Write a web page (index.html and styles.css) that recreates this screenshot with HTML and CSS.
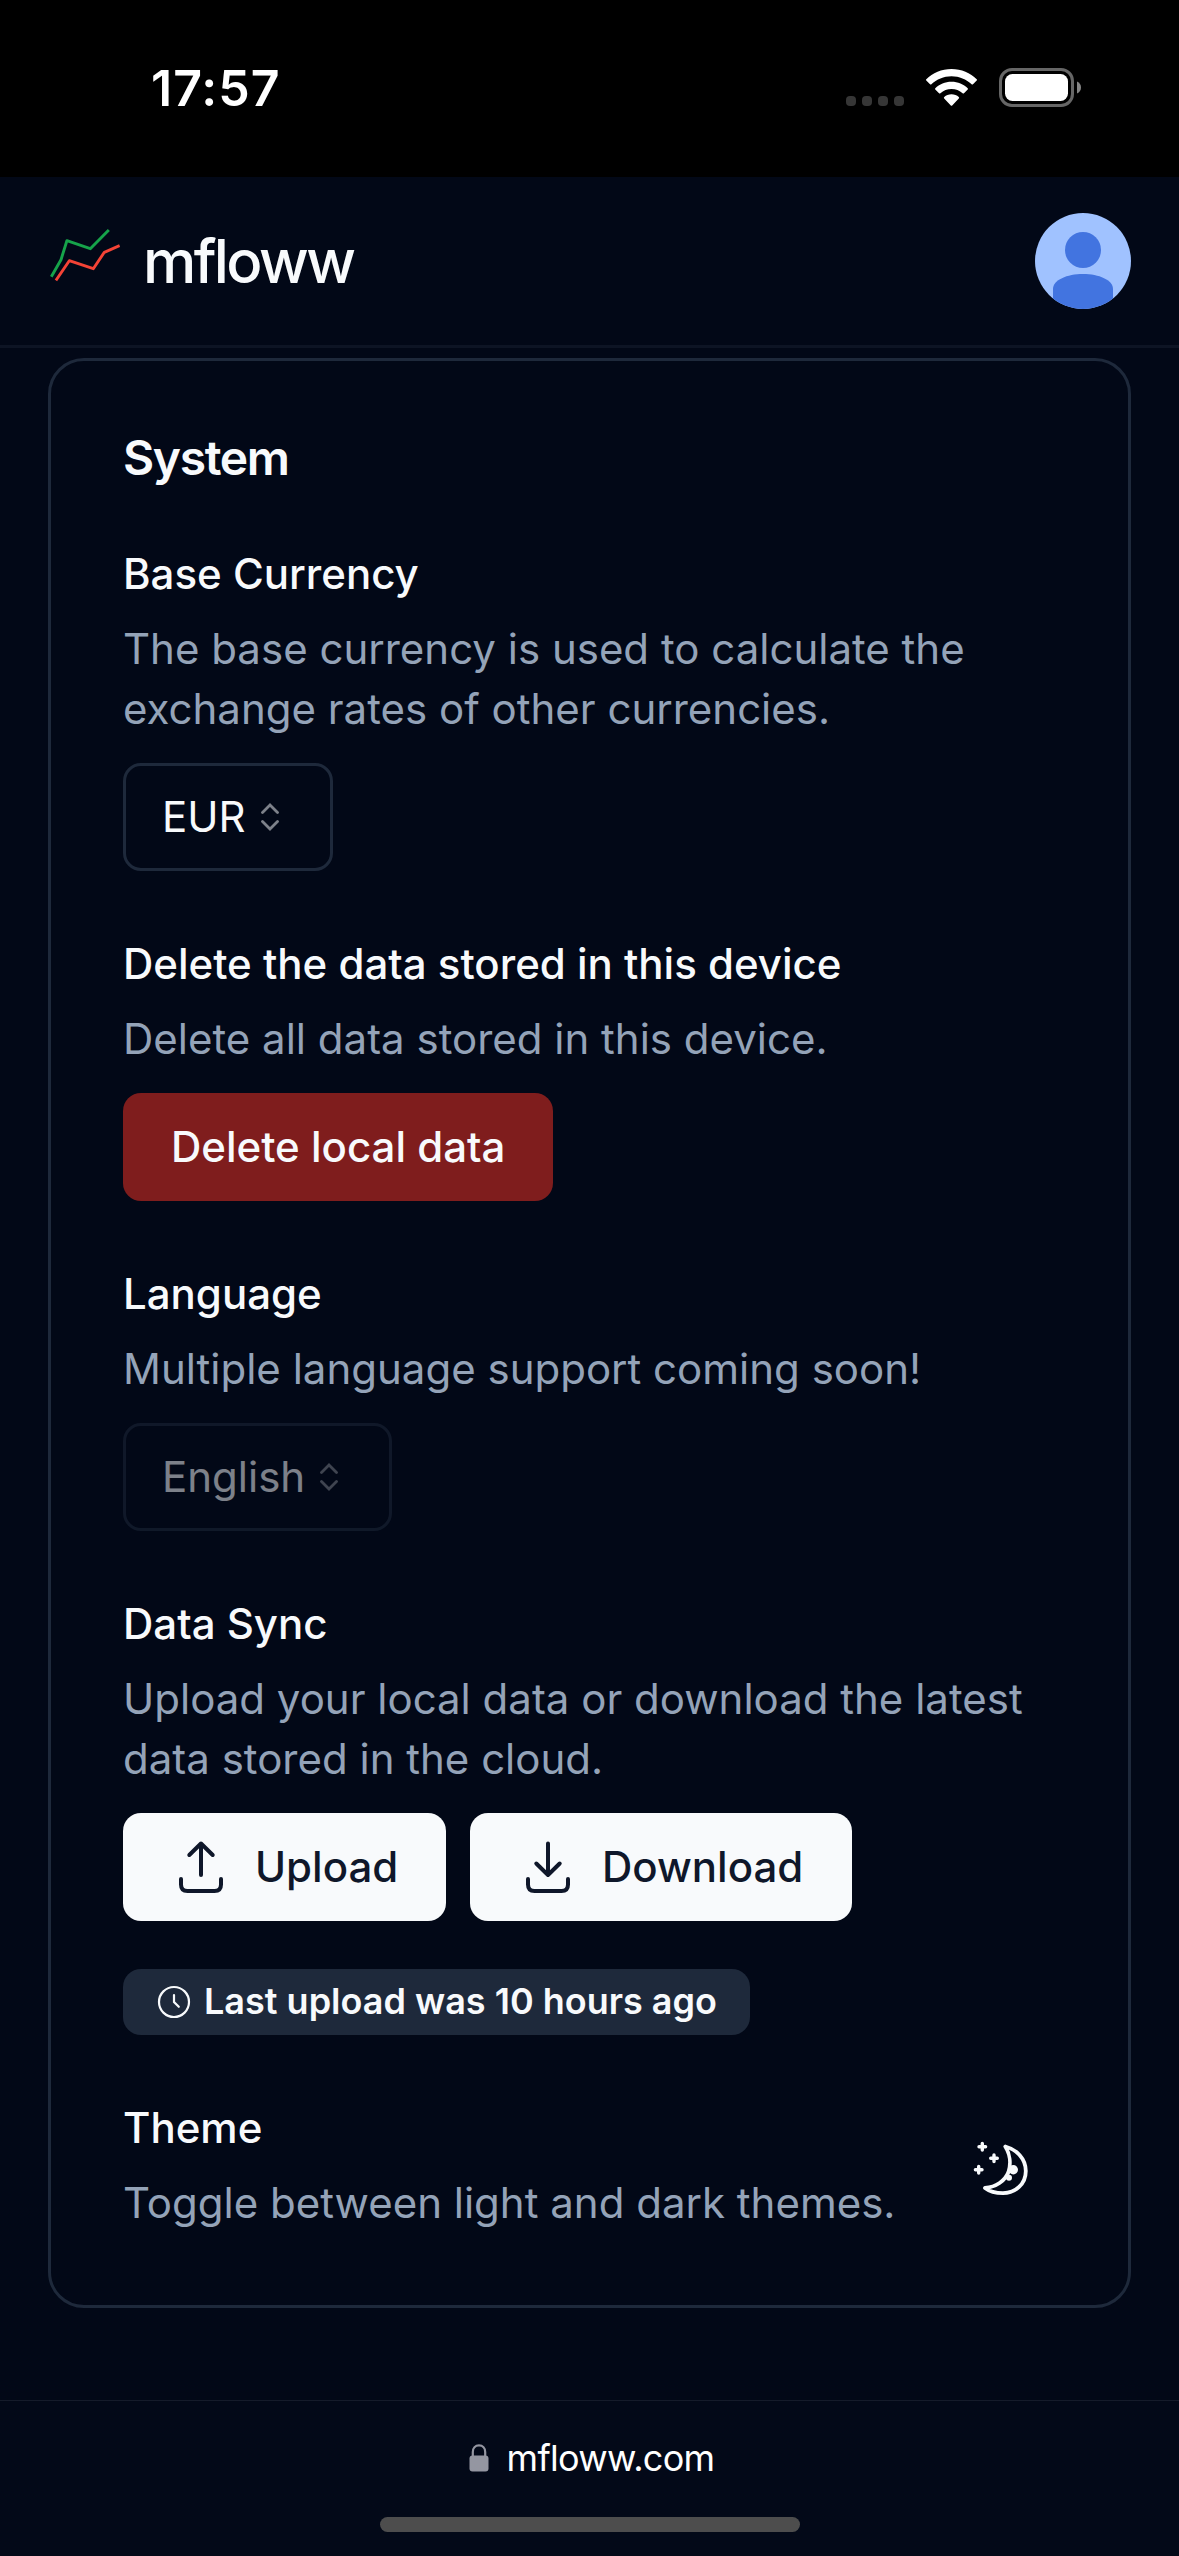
FILE: index.html
```
<!DOCTYPE html>
<html lang="en">
<head>
<meta charset="utf-8">
<title>mfloww</title>
<link rel="stylesheet" href="styles.css">
</head>
<body>
<div class="status-bar">
  <span class="status-time">17:57</span>
  <div class="status-icons">
    <div class="signal"><i></i><i></i><i></i><i></i></div>
    <svg class="wifi" viewBox="0 0 51 38" fill="#fff">
      <path d="M25.5 0C35.400 0 44.400 3.800 50.700 10.200Q51.300 10.900 50.700 11.600L47 15.200Q46.300 15.800 45.600 15.200C40.400 10.200 33.200 7.200 25.500 7.200S10.600 10.200 5.400 15.200Q4.700 15.800 4 15.200L.3 11.600Q-.3 10.900.3 10.200C6.600 3.800 15.600 0 25.500 0Z"/>
      <path d="M25.500 12.700C31.900 12.700 37.600 15.100 41.700 19.200Q42.300 19.900 41.700 20.500L38 24.200Q37.300 24.900 36.600 24.200C33.600 21.500 29.700 20 25.500 20S17.400 21.500 14.400 24.200Q13.700 24.900 13 24.200L9.300 20.500Q8.700 19.900 9.300 19.200C13.400 15.100 19.100 12.700 25.500 12.700Z"/>
      <path d="M25.500 25.300C28.300 25.300 30.900 26.300 32.800 28Q33.500 28.700 32.800 29.400L26.200 36.500Q25.500 37.200 24.800 36.500L18.200 29.400Q17.500 28.700 18.200 28C20.100 26.300 22.700 25.300 25.500 25.300Z"/>
    </svg>
    <svg class="battery" viewBox="0 0 82 39">
      <rect x="1.500" y="1.500" width="72" height="36" rx="11.500" fill="none" stroke="#666" stroke-width="3"/>
      <rect x="6" y="6" width="63" height="27" rx="7.500" fill="#fff"/>
      <path d="M78 13.500C80.600 14.600 82 16.800 82 19.500S80.600 24.400 78 25.500Z" fill="#858585"/>
    </svg>
  </div>
</div>

<header class="site-header">
  <div class="brand">
    <svg class="brand-mark" viewBox="0 0 72 60" fill="none" stroke-width="2.900" stroke-linejoin="round" stroke-linecap="square">
      <path stroke="#16a34a" d="M4 50.500 13 34.700 18.900 15.700 42.300 23.700 59.800 6"/>
      <path stroke="#f44336" d="M8.700 54.200 21.300 35.700 45.300 43.700 56.300 27.300 70.300 21.200"/>
    </svg>
    <span class="brand-name">mfloww</span>
  </div>
  <svg class="avatar" viewBox="0 0 96 96">
    <defs><clipPath id="disc"><circle cx="48" cy="48" r="48"/></clipPath></defs>
    <g clip-path="url(#disc)">
      <rect width="96" height="96" fill="#a0c2ff"/>
      <circle cx="48" cy="37" r="18" fill="#4274e0"/>
      <path d="M18 96V76C18 67 32 61 48 61S78 67 78 76V96Z" fill="#4274e0"/>
    </g>
  </svg>
</header>

<main class="page">
  <section class="card">
    <h2 class="card-title">System</h2>

    <div class="setting">
      <h3 class="label">Base Currency</h3>
      <p class="hint">The base currency is used to calculate the exchange rates of other currencies.</p>
      <button class="select select-currency"><span>EUR</span>
        <svg class="caret" viewBox="0 0 18 28"><path d="M1.500 9.500 9 2 16.500 9.500M1.500 18.500 9 26 16.500 18.500"/></svg>
      </button>
    </div>

    <div class="setting">
      <h3 class="label">Delete the data stored in this device</h3>
      <p class="hint">Delete all data stored in this device.</p>
      <button class="button danger"><span>Delete local data</span></button>
    </div>

    <div class="setting">
      <h3 class="label">Language</h3>
      <p class="hint">Multiple language support coming soon!</p>
      <button class="select select-language" disabled><span>English</span>
        <svg class="caret" viewBox="0 0 18 28"><path d="M1.500 9.500 9 2 16.500 9.500M1.500 18.500 9 26 16.500 18.500"/></svg>
      </button>
    </div>

    <div class="setting">
      <h3 class="label">Data Sync</h3>
      <p class="hint">Upload your local data or download the latest data stored in the cloud.</p>
      <div class="sync-actions">
        <button class="button primary upload">
          <svg class="button-icon" viewBox="0 0 60 60"><path d="M30 38V6.500M18.300 18 30 6.500 41.700 18M10 42V47.500Q10 54 16.500 54H43.500Q50 54 50 47.500V42"/></svg>
          <span>Upload</span>
        </button>
        <button class="button primary download">
          <svg class="button-icon" viewBox="0 0 60 60"><path d="M30 6.500V38M18.300 26.500 30 38 41.700 26.500M10 42V47.500Q10 54 16.500 54H43.500Q50 54 50 47.500V42"/></svg>
          <span>Download</span>
        </button>
      </div>
      <div class="badge">
        <svg class="clock" viewBox="0 0 36 36"><circle cx="18" cy="18" r="15"/><path d="M18 11V18L22.800 22.800"/></svg>
        <span>Last upload was 10 hours ago</span>
      </div>
    </div>

    <div class="setting theme-row">
      <div class="theme-text">
        <h3 class="label">Theme</h3>
        <p class="hint">Toggle between light and dark themes.</p>
      </div>
      <svg class="moon" viewBox="0 0 60 60" fill="none" stroke="#f8fafc" stroke-linecap="round" stroke-linejoin="round">
        <path stroke-width="3.800" d="M36.300 6.500C47.500 9.500 56.800 18.500 56.800 31 56.800 44 46.500 53.200 34 53.200 27 53.200 20.500 51.500 16 48 27 47 36 41 39.500 32 42 24 41 14 36.300 6.500Z"/>
        <path stroke-width="3.400" d="M13.300 3.400V10M10 6.700H16.600M25 15V21.600M21.700 18.300H28.300M9.700 26.400V33M6.400 29.700H13"/>
        <circle cx="44.300" cy="29.700" r="4.700" fill="#f8fafc" stroke="none"/><circle cx="40" cy="37.700" r="3" fill="#f8fafc" stroke="none"/>
      </svg>
    </div>
  </section>
</main>

<footer class="browser-bar">
  <div class="address">
    <svg class="lock" viewBox="0 0 20 28"><path d="M3.800 13V8C3.800 4 6.300 1.400 10 1.400S16.200 4 16.200 8V13" fill="none" stroke="#9496a1" stroke-width="2.200"/><rect x=".5" y="11.500" width="19" height="16" rx="3" fill="#9496a1"/></svg>
    <span>mfloww.com</span>
  </div>
  <div class="home-indicator"></div>
</footer>
</body>
</html>
```
FILE: styles.css
```
* { box-sizing: border-box; }

body {
  margin: 0;
  width: 1179px;
  height: 2556px;
  display: flex;
  flex-direction: column;
  overflow: hidden;
  background: #020817;
  color: #f8fafc;
  font-family: Inter, "Liberation Sans", sans-serif;
  font-size: 42px;
}

h2, h3, p { margin: 0; }
svg { display: block; flex: none; }
button { font: inherit; color: inherit; margin: 0; }

.status-bar {
  height: 177px;
  flex: none;
  display: flex;
  justify-content: space-between;
  align-items: flex-start;
  padding: 58px 98px 0 151px;
  background: #000;
  color: #fff;
}
.status-time {
  font-size: 50px;
  font-weight: 600;
  line-height: 60px;
  letter-spacing: 1px;
}
.status-icons { display: flex; align-items: flex-start; padding-top: 10px; }
.signal { display: flex; gap: 6px; padding-top: 28px; }
.signal i { width: 10px; height: 10px; border-radius: 4px; background: #363636; }
.wifi { width: 51px; height: 38px; margin: 1px 22px 0; }
.battery { width: 82px; height: 39px; }

.site-header {
  height: 171px;
  flex: none;
  display: flex;
  justify-content: space-between;
  align-items: center;
  padding: 0 48px;
  border-bottom: 3px solid #0d1424;
}
.brand { display: flex; align-items: center; gap: 23px; }
.brand-mark { width: 72px; height: 60px; margin-bottom: 12px; }
.brand-name { padding-bottom: 1px; font-size: 60px; font-weight: 500; line-height: 84px; letter-spacing: -2.6px; }
.avatar { width: 96px; height: 96px; }

.page { flex: 1; padding: 10px 48px 0; }
.card {
  display: flex;
  flex-direction: column;
  gap: 72px;
  padding: 72px;
  border: 3px solid #1e293b;
  border-radius: 36px;
}
.card-title { height: 48px; font-size: 48px; font-weight: 600; line-height: 50px; letter-spacing: -1.4px; }
.setting { display: flex; flex-direction: column; align-items: flex-start; gap: 24px; }
.label { font-size: 42px; font-weight: 500; line-height: 42px; }
.hint { color: #94a3b8; line-height: 60px; }

.select {
  display: flex;
  align-items: center;
  gap: 15px;
  height: 108px;
  padding: 0 36px;
  border: 3px solid #1e293b;
  border-radius: 18px;
  background: transparent;
}
.select-currency { width: 210px; }
.select-language { width: 269px; opacity: 0.5; }
.select span, .button span { line-height: 60px; }
.caret { width: 18px; height: 28px; fill: none; stroke: currentColor; stroke-width: 2.8; stroke-linecap: round; opacity: 0.5; }

.button {
  display: flex;
  align-items: center;
  height: 108px;
  padding: 0 48px;
  border: 0;
  border-radius: 18px;
  font-weight: 500;
  white-space: nowrap;
}
.danger { width: 430px; background: #7f1d1d; }
.primary { gap: 24px; background: #f8fafc; color: #0f172a; }
.upload { width: 323px; }
.download { width: 382px; }
.button-icon { width: 60px; height: 60px; fill: none; stroke: currentColor; stroke-width: 4; stroke-linecap: round; stroke-linejoin: round; }
.sync-actions { display: flex; gap: 24px; }

.badge {
  display: flex;
  align-items: center;
  gap: 12px;
  width: 627px;
  height: 66px;
  margin-top: 24px;
  padding: 0 33px;
  border-radius: 18px;
  background: #1e293b;
  font-size: 36px;
  font-weight: 600;
  white-space: nowrap;
}
.badge span { line-height: 48px; padding-bottom: 2px; }
.clock { width: 36px; height: 36px; fill: none; stroke: currentColor; stroke-width: 2.2; stroke-linecap: round; }

.theme-row { flex-direction: row; justify-content: space-between; align-items: center; }
.theme-text { display: flex; flex-direction: column; gap: 24px; }
.moon { width: 60px; height: 60px; margin-right: 27px; }

.browser-bar {
  height: 156px;
  flex: none;
  display: flex;
  flex-direction: column;
  justify-content: space-between;
  align-items: center;
  padding: 34px 0 24px;
  border-top: 1px solid #151b2a;
  background: #030918;
}
.address { display: flex; align-items: center; gap: 18px; padding-left: 4px; font-size: 36px; line-height: 46px; letter-spacing: -0.7px; color: #fff; }
.lock { width: 20px; height: 28px; }
.home-indicator { width: 420px; height: 15px; border-radius: 8px; background: #4d4d4d; }
```
